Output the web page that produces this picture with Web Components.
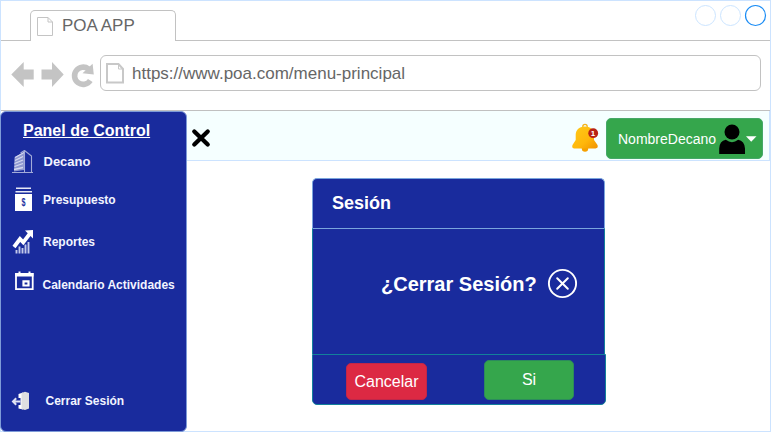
<!DOCTYPE html>
<html lang="es">
<head>
<meta charset="utf-8">
<title>POA APP</title>
<style>
html,body{margin:0;height:100%;overflow:hidden;background:#fff}
body{font-family:"Liberation Sans",Arial,sans-serif}
</style>
</head>
<body>
<poa-window>
  <poa-tabs slot="chrome">POA APP</poa-tabs>
  <poa-address slot="chrome">https://www.poa.com/menu-principal</poa-address>
  <poa-sidebar slot="side">
    <span slot="title">Panel de Control</span>
    <poa-item style="--h:32px;--gap:7.5px;--size:13px">
      <svg slot="icon" width="26" height="28" viewBox="10 147 26 28"><path d="M14.500 157.500 24 152V170L14 171.500Z" fill="#8f99d0"/><path d="M15 157.500 24 152.500M15 160.500 23 156.500M14.500 163.500 23 160M14.500 166.500 23 163.500M14 169.500 23 167.500" stroke="#d5d9ef" stroke-width="1.300"/><path d="M24.500 150.500 31.500 156V172M20.500 153 24.500 150.500M24.500 151V172M12 172.500H33" stroke="#a2abd9" stroke-width="1.100" fill="none"/></svg>
      Decano</poa-item>
    <poa-item style="--h:44px;--gap:7px;--size:12px;--drop:1px">
      <svg slot="icon" width="26" height="28" viewBox="10 185 26 28"><path d="M16 188.300H31M15.500 191.800H32" stroke="#e6e8f6" stroke-width="1.400"/><path d="M15 194H32V211H15Z" fill="#fff"/><text x="23.400" y="206" text-anchor="middle" font-size="10" textLength="4" lengthAdjust="spacingAndGlyphs" fill="#24359f">$</text></svg>
      Presupuesto</poa-item>
    <poa-item style="--h:41px;--gap:7px;--size:12px">
      <svg slot="icon" width="26" height="28" viewBox="10 227.500 26 28"><path d="M14 246.500 20 238.500 23.200 241.800 30 233" fill="none" stroke="#fff" stroke-width="3.800"/><path d="M25 230 33 229.500V238Z" fill="#fff"/><path d="M16.500 253V249.500M19.500 253V246M22.500 253V247.500M25.500 253V244M28.500 253V241.500" stroke="#c3c9ea" stroke-width="1.900"/></svg>
      Reportes</poa-item>
    <poa-item style="--h:44px;--gap:6.5px;--size:12px;--drop:1px">
      <svg slot="icon" width="26" height="28" viewBox="10 270 26 28"><path d="M16 274H32.700V289.200H16Z" fill="none" stroke="#fff" stroke-width="1.800"/><path d="M15.200 273H33.500V276.500H15.200ZM18.500 271.500H20.500V274H18.500ZM28.500 271.500H30.500V274H28.500Z" fill="#fff"/><path d="M23.500 281.300H28.500V285.500H23.500Z" fill="#192b9d" stroke="#fff" stroke-width="2.200"/></svg>
      Calendario Actividades</poa-item>
    <poa-item slot="foot" style="--h:32px;--gap:9.5px;--size:12px">
      <svg slot="icon" width="26" height="28" viewBox="10 386 26 28"><path d="M18.500 393 23 391.500V408.500L18.500 407.500V404H20.500V397H18.500Z" fill="#fff"/><path d="M21.500 392 25 390.800 29 392V407.500L25 409 21.500 408Z" fill="#dfdfe1"/><path d="M20.500 400.500H13.500M16.200 397.300 13 400.500 16.200 403.700" fill="none" stroke="#dfe2f3" stroke-width="2"/></svg>
      Cerrar Sesión</poa-item>
  </poa-sidebar>
  <poa-topbar slot="top">NombreDecano</poa-topbar>
  <poa-dialog slot="main">
    <span slot="title">Sesión</span>
    ¿Cerrar Sesión?
    <poa-button slot="actions" style="--w:81px;--h:37px;--bg:#dc2943;--bd:#c02749;margin:3px 0 0 33px">Cancelar</poa-button>
    <poa-button slot="actions" style="--w:90px;--h:40px;--bg:#35a64c;--bd:#2c8b5c;--lift:1px;margin:0 0 0 57px">Si</poa-button>
  </poa-dialog>
</poa-window>
<script>
const define = (name, html) => customElements.define(name, class extends HTMLElement {
  constructor() {
    super();
    const t = document.createElement('template');
    t.innerHTML = html;
    this.attachShadow({mode: 'open'}).append(t.content.cloneNode(true));
  }
});

define('poa-window', `<style>
:host{display:flex;flex-direction:column;box-sizing:border-box;width:771px;height:432px;background:#fff;border:1px solid #cce3ff}
.body{display:flex;flex:1;margin-left:-1px;margin-bottom:-1px;min-height:0}
.right{flex:1;display:flex;flex-direction:column;min-width:0}
main{display:flex;flex:1;padding:17px 0 0 125px;align-items:flex-start;box-sizing:border-box;border-bottom:1px solid #cce3ff}
</style>
<slot name="chrome"></slot>
<div class="body"><slot name="side"></slot><div class="right"><slot name="top"></slot><main><slot name="main"></slot></main></div></div>`);

define('poa-tabs', `<style>
:host{display:flex;align-items:flex-end;height:40px;flex:none}
.line{box-sizing:border-box;height:40px;border-bottom:1px solid #c2c2c2}
.l{width:29px}.r{flex:1;display:flex;justify-content:flex-end}
.tab{box-sizing:border-box;width:146px;height:31px;border:1px solid #c2c2c2;border-bottom:0;border-radius:5px 5px 0 0;display:flex;align-items:center;padding:0 0 0 5px;font-size:17px;color:#666}
.tab span{margin-left:8px}
svg{display:block;flex:none}
</style>
<div class="line l"></div>
<div class="tab"><svg width="18" height="20" viewBox="36 16 18 20"><path d="M37.500 17.500H48L52.500 22V35.500H37.500Z M48 17.500V22H52.500" fill="none" stroke="#c4c4c4"/></svg><span><slot></slot></span></div>
<div class="line r"><svg width="80" height="30" viewBox="690 1 80 30" fill="none"><circle cx="705.500" cy="15.500" r="10" stroke="#cce5ff"/><circle cx="730.500" cy="15.500" r="10" stroke="#cce5ff"/><circle cx="755.500" cy="15.500" r="10" stroke="#1a8cf5" stroke-width="1.200"/></svg></div>`);

define('poa-address', `<style>
:host{display:flex;box-sizing:border-box;height:70px;flex:none;padding:14px 9px 0 9px;border-bottom:1px solid #c0c0c0}
svg{display:block;flex:none}
.url{box-sizing:border-box;width:661px;height:36px;border:1px solid #c2c2c2;border-radius:6px;display:flex;align-items:center;padding-left:4px;font-size:17px;color:#666}
.url span{margin-left:7px;padding-top:2px}
</style>
<svg width="90" height="36" viewBox="10 55 90 36"><path d="M11.300 74.500 23.700 62V69.500H33.700V79.500H23.700V87ZM63.700 74.500 52 62V69.500H41.500V79.500H52V87Z" fill="#c4c4c4"/><path d="M90.300 80.500A8.600 8.600 0 1 1 88.500 69" fill="none" stroke="#c4c4c4" stroke-width="5.600"/><path d="M92.600 63.800 93.800 74.500 82.500 73.200Z" fill="#c4c4c4"/></svg>
<div class="url"><svg width="20" height="24" viewBox="105 61 20 24"><path d="M107 64H118.500L123 69V82.500H107Z" fill="none" stroke="#c8c8c8" stroke-width="2"/><path d="M118.500 64V69H123" fill="none" stroke="#c8c8c8"/></svg><span><slot></slot></span></div>`);

define('poa-sidebar', `<style>
:host{display:flex;flex-direction:column;box-sizing:border-box;width:187px;flex:none;background:#192b9d;border:1px solid #7e9bd8;border-radius:6px;color:#f2f4ff;padding-bottom:14px}
.title{height:33px;padding-left:22px;font:bold 16px/37px "Liberation Sans",Arial,sans-serif;text-decoration:underline;color:#fff}
.space{flex:1}
</style>
<div class="title"><slot name="title"></slot></div><slot></slot><div class="space"></div><slot name="foot"></slot>`);

define('poa-item', `<style>
:host{display:flex;align-items:center;height:var(--h);flex:none;padding-left:9px;font-weight:bold;font-size:var(--size)}
::slotted(svg){display:block;flex:none}
span{margin-left:var(--gap);white-space:nowrap;padding-top:calc(var(--drop,0px)*2)}
</style>
<slot name="icon"></slot><span><slot></slot></span>`);

define('poa-topbar', `<style>
:host{display:flex;box-sizing:border-box;height:50px;flex:none;background:#f5ffff;border-bottom:1px solid #cce3ff;border-right:1px solid #cce3ff}
svg{display:block;flex:none}
.space{flex:1}
.user{box-sizing:border-box;width:157px;height:41px;margin:7px 6px 0 0;background:#35a64c;border:1px solid #45a868;border-radius:5px;display:flex;align-items:center;padding-left:11px;color:#fff;font-size:14px}
.user span{width:100px}
</style>
<svg width="28" height="49" viewBox="187 111 28 49"><path d="M194.300 131.500 207.700 144.500M207.700 131.500 194.300 144.500" stroke="#000" stroke-width="4.300" stroke-linecap="round"/></svg>
<div class="space"></div>
<svg width="36" height="49" viewBox="570 111 36 49"><defs><linearGradient id="g" x2="1" y2="1"><stop stop-color="#ffca18"/><stop offset=".6" stop-color="#ffb70b"/><stop offset="1" stop-color="#f09200"/></linearGradient></defs><circle cx="585" cy="126.500" r="2.200" fill="none" stroke="#f3b31c" stroke-width="1.300"/><circle cx="585" cy="148.600" r="3.200" fill="#f5a000"/><path d="M585 126.500C578.500 126.500 576 130.500 575.700 134.500V140L572.500 145Q571.500 148 574 148.500H595.500Q598.500 148 597.500 145L594 140V134.500C593.500 130.500 591.500 126.500 585 126.500Z" fill="url(#g)"/><circle cx="593.200" cy="133.200" r="4.900" fill="#b92213"/><text x="593.100" y="136.200" text-anchor="middle" font-size="8" font-weight="bold" fill="#fff">1</text></svg>
<div class="user"><span><slot></slot></span><svg width="42" height="39" viewBox="717.500 119 42 39"><circle cx="731.500" cy="132" r="7.500" fill="#000"/><path d="M718.700 154V148.500Q719 141 725.300 139.800Q731.500 144.500 737.700 139.800Q744 141 744.500 148.500V154Z" fill="#000"/><path d="M745.500 136.300H756L750.700 141.700Z" fill="#fff"/></svg></div>`);

define('poa-dialog', `<style>
:host{display:flex;flex-direction:column;width:294px;color:#fff;font-weight:bold}
div{box-sizing:border-box;background:#192b9d;display:flex}
.head{width:293px;height:50px;border:1px solid #7aa5dd;border-bottom:0;border-radius:5px 5px 0 0;align-items:center;padding:0 0 0 19px;font-size:18px}
.mid{width:293px;height:126px;border:1px solid #12809b;border-top-color:#7aa5dd;border-bottom:0;align-items:center;padding:0 0 16px 68px;font-size:20px}
.mid span{width:166px;white-space:nowrap;padding-top:1px}
.foot{width:294px;height:51px;border:1px solid #12809b;border-radius:0 0 5px 5px;padding-top:5px;align-items:flex-start}
svg{display:block;flex:none}
</style>
<div class="head"><slot name="title"></slot></div>
<div class="mid"><span><slot></slot></span><svg width="32" height="32" viewBox="0 0 32 32" fill="none" stroke="#fff" stroke-linecap="round"><circle cx="15.500" cy="15.500" r="13.600" stroke-width="1.900"/><path d="M10.200 10.200 20.800 20.800M20.800 10.200 10.200 20.800" stroke-width="2"/></svg></div>
<div class="foot"><slot name="actions"></slot></div>`);

define('poa-button', `<style>
:host{display:flex;box-sizing:border-box;width:var(--w);height:var(--h);flex:none;align-items:center;justify-content:center;background:var(--bg);border:1px solid var(--bd);border-radius:5px;font-size:16px;font-weight:normal;color:#fff;padding-bottom:var(--lift,0)}
</style><slot></slot>`);
</script>
</body>
</html>
